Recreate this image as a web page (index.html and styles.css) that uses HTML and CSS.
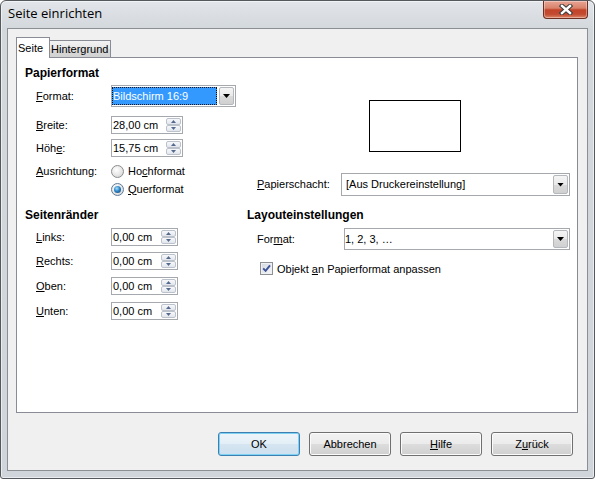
FILE: index.html
```html
<!DOCTYPE html>
<html lang="de">
<head>
<meta charset="utf-8">
<title>Seite einrichten</title>
<link rel="stylesheet" href="styles.css">
</head>
<body>
<div class="window">
  <div class="titlebar">
    <span class="title">Seite einrichten</span>
    <span class="close">
      <svg width="14" height="11" viewBox="0 0 14 11">
        <path d="M3 2 L11 9 M11 2 L3 9" fill="none" stroke="#3a3a3a" stroke-width="4.4" stroke-linecap="square"/>
        <path d="M3 2 L11 9 M11 2 L3 9" fill="none" stroke="#ffffff" stroke-width="2.4" stroke-linecap="square"/>
      </svg>
    </span>
  </div>
  <div class="client">
    <div class="tabs">
      <div class="tab active">Seite</div>
      <div class="tab tab-bg">Hintergrund</div>
    </div>
    <div class="panel">
      <div class="col-left">
        <div class="heading">Papierformat</div>
        <div class="row r-format">
          <span class="label"><u>F</u>ormat:</span>
          <div class="combo combo-main">
            <span class="combo-text sel">Bildschirm 16:9</span>
            <span class="drop"></span>
          </div>
        </div>
        <div class="row r-breite">
          <span class="label"><u>B</u>reite:</span>
          <div class="spin spin-wide"><span class="val">28,00 cm</span><span class="btns"><span class="up"></span><span class="down"></span></span></div>
        </div>
        <div class="row r-hoehe">
          <span class="label">Höh<u>e</u>:</span>
          <div class="spin spin-wide"><span class="val">15,75 cm</span><span class="btns"><span class="up"></span><span class="down"></span></span></div>
        </div>
        <div class="row r-radio r-radio1">
          <span class="label"><u>A</u>usrichtung:</span>
          <span class="radio"></span>
          <span class="radio-text">Ho<u>c</u>hformat</span>
        </div>
        <div class="row r-radio">
          <span class="radio radio-indent checked"></span>
          <span class="radio-text"><u>Q</u>uerformat</span>
        </div>
        <div class="heading h-margins">Seitenränder</div>
        <div class="row r-m r-m1">
          <span class="label"><u>L</u>inks:</span>
          <div class="spin spin-narrow"><span class="val">0,00 cm</span><span class="btns"><span class="up"></span><span class="down"></span></span></div>
        </div>
        <div class="row r-m r-m2">
          <span class="label"><u>R</u>echts:</span>
          <div class="spin spin-narrow"><span class="val">0,00 cm</span><span class="btns"><span class="up"></span><span class="down"></span></span></div>
        </div>
        <div class="row r-m r-m3">
          <span class="label"><u>O</u>ben:</span>
          <div class="spin spin-narrow"><span class="val">0,00 cm</span><span class="btns"><span class="up"></span><span class="down"></span></span></div>
        </div>
        <div class="row r-m r-m3">
          <span class="label"><u>U</u>nten:</span>
          <div class="spin spin-narrow"><span class="val">0,00 cm</span><span class="btns"><span class="up"></span><span class="down"></span></span></div>
        </div>
      </div>
      <div class="col-right">
        <div class="preview"></div>
        <div class="row r-schacht">
          <span class="label-r label-schacht"><u>P</u>apierschacht:</span>
          <div class="combo combo-schacht">
            <span class="combo-text pad4">[Aus Druckereinstellung]</span>
            <span class="drop"></span>
          </div>
        </div>
        <div class="heading h-layout">Layouteinstellungen</div>
        <div class="row r-lformat">
          <span class="label-r label-lformat">For<u>m</u>at:</span>
          <div class="combo combo-layout">
            <span class="combo-text">1, 2, 3, …</span>
            <span class="drop"></span>
          </div>
        </div>
        <div class="row r-check">
          <span class="check">
            <svg width="9" height="9" viewBox="0 0 9 9"><path d="M1.2 4.4 L3.6 6.9 L8 1.4" fill="none" stroke="#3d5196" stroke-width="1.9"/></svg>
          </span>
          <span class="check-text">Objekt <u>a</u>n Papierformat anpassen</span>
        </div>
      </div>
    </div>
    <div class="buttons">
      <button class="btn default">OK</button>
      <button class="btn">Abbrechen</button>
      <button class="btn"><u>H</u>ilfe</button>
      <button class="btn">Z<u>u</u>rück</button>
    </div>
  </div>
</div>
</body>
</html>
```

FILE: styles.css
```css
* { box-sizing: border-box; }
html, body { margin: 0; padding: 0; }
body {
  width: 595px;
  height: 479px;
  overflow: hidden;
  font-family: "Liberation Sans", Arial, sans-serif;
  font-size: 11px;
  line-height: 13px;
  color: #000;
  background: #fff;
}
u { text-underline-offset: 1px; }

.window {
  width: 595px;
  height: 479px;
  border: 1px solid #55585c;
  border-radius: 6px 6px 3px 3px;
  background: linear-gradient(#e2e5e9, #d3d8dd 28px, #d0d5db);
  box-shadow: inset 0 0 0 1px rgba(255,255,255,0.55);
  display: flex;
  flex-direction: column;
  overflow: hidden;
}

.titlebar {
  flex: none;
  height: 27px;
  display: flex;
  align-items: flex-start;
}
.title {
  flex: 1;
  font-family: "Open Sans", "Liberation Sans", sans-serif;
  font-size: 13px;
  line-height: 18px;
  margin: 3px 0 0 7px;
}
.close {
  flex: none;
  width: 45px;
  height: 18px;
  margin-right: 6px;
  border: 1px solid #6e2f22;
  border-top: none;
  border-radius: 0 0 4px 4px;
  background: linear-gradient(#e8a595, #d9826a 42%, #c2432a 52%, #c34b30 78%, #dc8567);
  box-shadow: inset 0 0 0 1px rgba(255,255,255,0.35);
  display: flex;
  align-items: center;
  justify-content: center;
}

.client {
  flex: none;
  height: 443px;
  margin: 0 6px;
  border: 1px solid #8b8e93;
  background: #f0f0f0;
  padding: 8px 9px 0 8px;
  display: flex;
  flex-direction: column;
}

.tabs {
  position: relative;
  z-index: 1;
  display: flex;
  align-items: flex-end;
  height: 21px;
  margin-bottom: -1px;
  flex: none;
}
.tab {
  border: 1px solid #898c95;
  border-bottom: none;
  height: 17px;
  margin-bottom: 1px;
  padding: 2px 0 0 1px;
  background: linear-gradient(#f3f3f3, #e6e6e6 50%, #d9d9d9 51%, #d2d2d2);
  white-space: nowrap;
}
.tab.active {
  height: 21px;
  margin-bottom: 0;
  padding: 4px 5px 0 1px;
  background: #fff;
  width: 34px;
}
.tab-bg {
  width: 61px;
  border-left: none;
}

.panel {
  flex: none;
  height: 356px;
  border: 1px solid #898c95;
  background: #fff;
  display: flex;
  padding: 8px 0 0 8px;
}

.col-left {
  width: 222px;
  display: flex;
  flex-direction: column;
}
.col-right {
  width: 322px;
  display: flex;
  flex-direction: column;
}

.heading {
  font-weight: bold;
  font-size: 12px;
  line-height: 14px;
  height: 14px;
  white-space: nowrap;
}
.h-margins { margin-top: 10px; }
.h-layout { margin-top: 12px; }

.row {
  display: flex;
  align-items: center;
  flex: none;
}
.label {
  flex: none;
  width: 75px;
  margin-left: 11px;
  white-space: nowrap;
}

.r-format { height: 22px; margin-top: 5px; }
.r-breite { height: 18px; margin-top: 9px; }
.r-hoehe { height: 18px; margin-top: 5px; }
.r-radio { height: 18px; }
.r-radio1 { margin-top: 5px; }
.r-m { height: 18px; }
.r-m1 { margin-top: 6px; }
.r-m2 { margin-top: 6px; }
.r-m3 { margin-top: 7px; }

/* combo boxes */
.combo {
  flex: none;
  height: 100%;
  display: flex;
  border: 1px solid #a5a9ae;
  background: #fff;
}
.combo-main { width: 125px; }
.combo-schacht { width: 229px; }
.combo-layout { width: 226px; }
.combo-text {
  flex: 1;
  display: flex;
  align-items: center;
  white-space: nowrap;
  overflow: hidden;
}
.combo-text.pad4 { padding-left: 4px; }
.combo-text.sel {
  margin: 1px 1px 1px 0;
  background: #3399ff;
  color: #fff;
  border: 1px dotted #111;
}
.drop {
  flex: none;
  width: 15px;
  margin: 1px;
  border: 1px solid #b4b7bb;
  border-radius: 2px;
  background: linear-gradient(#f5f5f5, #e9e9e9 50%, #dadada 51%, #d0d0d0);
  display: flex;
  align-items: center;
  justify-content: center;
}
.drop::after {
  content: "";
  width: 7px;
  height: 4px;
  background: #000;
  clip-path: polygon(0 0, 100% 0, 50% 100%);
}

/* spin fields */
.spin {
  flex: none;
  height: 100%;
  display: flex;
  border: 1px solid #a5a9ae;
  background: #fff;
}
.spin-wide { width: 72px; }
.spin-narrow { width: 67px; }
.spin .val {
  flex: 1;
  padding-left: 1px;
  display: flex;
  align-items: center;
  white-space: nowrap;
}
.btns {
  flex: none;
  width: 15px;
  margin: 1px 1px 1px 0;
  display: flex;
  flex-direction: column;
}
.btns span {
  flex: 1;
  border: 1px solid #bcc2cb;
  border-radius: 2px;
  background: linear-gradient(#f7f8fa, #e2e6ec);
  display: flex;
  align-items: center;
  justify-content: center;
}
.btns span::after {
  content: "";
  width: 5px;
  height: 3px;
  background: #55688e;
}
.btns .up::after { clip-path: polygon(50% 0, 100% 100%, 0 100%); }
.btns .down::after { clip-path: polygon(0 0, 100% 0, 50% 100%); }

/* radios */
.radio {
  flex: none;
  width: 13px;
  height: 13px;
  border-radius: 50%;
  border: 1px solid #8a8c8e;
  background: radial-gradient(circle at 40% 35%, #ffffff, #e6e6e6 55%, #cbcbcb);
  display: flex;
  align-items: center;
  justify-content: center;
}
.radio-indent { margin-left: 86px; }
.radio.checked { border-color: #5d7a97; }
.radio.checked::after {
  content: "";
  width: 7px;
  height: 7px;
  border-radius: 50%;
  background: radial-gradient(circle at 40% 35%, #a6e0fb, #2e86c8 45%, #0e3d69);
}
.radio-text {
  margin-left: 4px;
  white-space: nowrap;
}

/* right column */
.preview {
  flex: none;
  width: 92px;
  height: 52px;
  border: 1px solid #000;
  background: #fff;
  margin: 34px 0 0 122px;
}
.r-schacht { height: 23px; margin-top: 21px; }
.r-lformat { height: 22px; margin-top: 6px; }
.label-r {
  flex: none;
  margin-left: 10px;
  white-space: nowrap;
}
.label-schacht { width: 84px; }
.label-lformat { width: 87px; }

.r-check { height: 13px; margin-top: 12px; }
.check {
  flex: none;
  width: 13px;
  height: 13px;
  margin-left: 13px;
  border: 1px solid #8e9094;
  background: linear-gradient(135deg, #d3d8e0, #f6f7f9);
  box-shadow: inset 0 0 0 1px #eef0f3;
  display: flex;
  align-items: center;
  justify-content: center;
}
.check-text {
  margin-left: 4px;
  white-space: nowrap;
  padding-top: 1px;
}

/* buttons */
.buttons {
  flex: none;
  display: flex;
  justify-content: flex-end;
  gap: 9px;
  margin-top: 19px;
  margin-right: 5px;
}
.btn {
  width: 82px;
  height: 24px;
  padding: 0;
  font: inherit;
  color: #000;
  border: 1px solid #707070;
  border-radius: 3px;
  background: linear-gradient(#f2f2f2, #ebebeb 50%, #dddddd 51%, #cfcfcf);
  box-shadow: inset 0 0 0 1px #fbfbfb;
  display: flex;
  align-items: center;
  justify-content: center;
}
.btn.default {
  border-color: #3c7fb1;
  background: linear-gradient(#eef5fa, #e3eef6 50%, #d5e5f1 51%, #cde0ee);
  box-shadow: inset 0 0 0 1px #7fd1f3;
}
```
